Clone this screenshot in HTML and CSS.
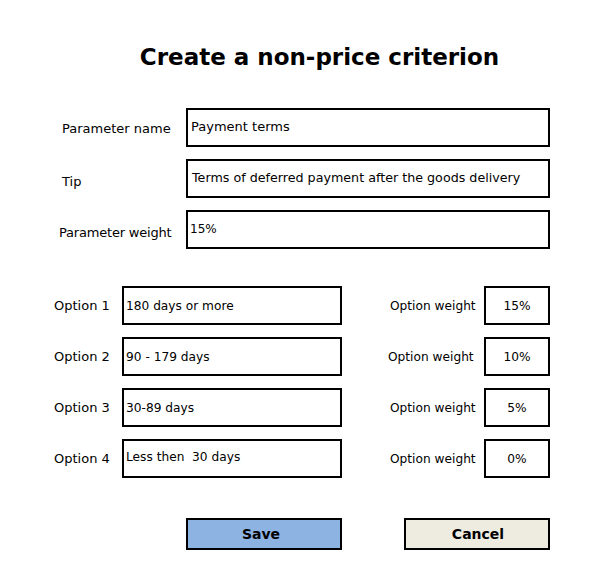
FILE: index.html
```html
<!DOCTYPE html>
<html lang="en">
<head>
<meta charset="utf-8">
<title>Create a non-price criterion</title>
<link rel="stylesheet" href="styles.css">
</head>
<body>
<div class="page">
  <h1 class="title">Create a non-price criterion</h1>

  <div class="params">
    <div class="param-row">
      <span class="param-label">Parameter name</span>
      <div class="field field-wide">Payment terms</div>
    </div>
    <div class="param-row">
      <span class="param-label param-label-low">Tip</span>
      <div class="field field-wide field-tip">Terms of deferred payment after the goods delivery</div>
    </div>
    <div class="param-row">
      <span class="param-label param-label-shift param-label-low">Parameter weight</span>
      <div class="field field-wide field-small">15%</div>
    </div>
  </div>

  <div class="options">
    <div class="option-row">
      <span class="option-label">Option 1</span>
      <div class="field field-option">180 days or more</div>
      <span class="weight-label">Option weight</span>
      <div class="field field-weight">15%</div>
    </div>
    <div class="option-row">
      <span class="option-label">Option 2</span>
      <div class="field field-option">90 - 179 days</div>
      <span class="weight-label weight-label-left">Option weight</span>
      <div class="field field-weight">10%</div>
    </div>
    <div class="option-row">
      <span class="option-label">Option 3</span>
      <div class="field field-option">30-89 days</div>
      <span class="weight-label">Option weight</span>
      <div class="field field-weight">5%</div>
    </div>
    <div class="option-row">
      <span class="option-label">Option 4</span>
      <div class="field field-option field-raised">Less then&nbsp; 30 days</div>
      <span class="weight-label">Option weight</span>
      <div class="field field-weight">0%</div>
    </div>
  </div>

  <div class="actions">
    <button class="btn btn-save" type="button">Save</button>
    <button class="btn btn-cancel" type="button">Cancel</button>
  </div>
</div>
</body>
</html>
```

FILE: styles.css
```css
html, body {
  margin: 0;
  padding: 0;
  background: #ffffff;
}

body {
  font-family: "DejaVu Sans", "Liberation Sans", sans-serif;
  font-size: 13px;
  color: #000000;
}

.page {
  width: 611px;
  padding-top: 44px;
  box-sizing: border-box;
}

.title {
  margin: 0;
  padding-left: 28px;
  font-size: 23px;
  line-height: 26px;
  font-weight: bold;
  text-align: center;
}

.params {
  margin-top: 38px;
  display: flex;
  flex-direction: column;
  gap: 12px;
}

.param-row {
  display: flex;
  align-items: center;
}

.param-label {
  width: 124px;
  padding-left: 62px;
  padding-top: 2px;
}

.param-label-low {
  padding-top: 5px;
}

.param-label-shift {
  width: 127px;
  padding-left: 59px;
  letter-spacing: -0.2px;
}

.field {
  box-sizing: border-box;
  height: 39px;
  border: 2px solid #000000;
  background: #ffffff;
  display: flex;
  align-items: center;
  white-space: nowrap;
}

.field-wide {
  width: 364px;
  padding-left: 3px;
  padding-bottom: 2px;
}

.field-tip {
  padding-left: 4px;
  font-size: 12.7px;
}

.field-small {
  padding-left: 2px;
  font-size: 12px;
}

.options {
  margin-top: 37px;
  display: flex;
  flex-direction: column;
  gap: 12px;
}

.option-row {
  display: flex;
  align-items: center;
}

.option-label {
  width: 68px;
  padding-left: 54px;
}

.field-option {
  width: 220px;
  padding-left: 2px;
  font-size: 12.2px;
}

.field-raised {
  padding-bottom: 4px;
}

.weight-label {
  width: 94px;
  padding-left: 48px;
  font-size: 12.2px;
}

.weight-label-left {
  width: 96px;
  padding-left: 46px;
}

.field-weight {
  width: 66px;
  justify-content: center;
  padding-top: 1px;
  font-size: 12.2px;
}

.actions {
  margin-top: 40px;
  display: flex;
  padding-left: 186px;
  gap: 62px;
}

.btn {
  box-sizing: border-box;
  height: 32px;
  border: 2px solid #000000;
  border-radius: 0;
  font-family: "DejaVu Sans", "Liberation Sans", sans-serif;
  font-size: 14px;
  font-weight: bold;
  color: #000000;
  padding: 0;
}

.btn-save {
  width: 156px;
  padding-right: 6px;
  background: #8db3e2;
}

.btn-cancel {
  width: 146px;
  padding-left: 2px;
  background: #eeece1;
}
```
